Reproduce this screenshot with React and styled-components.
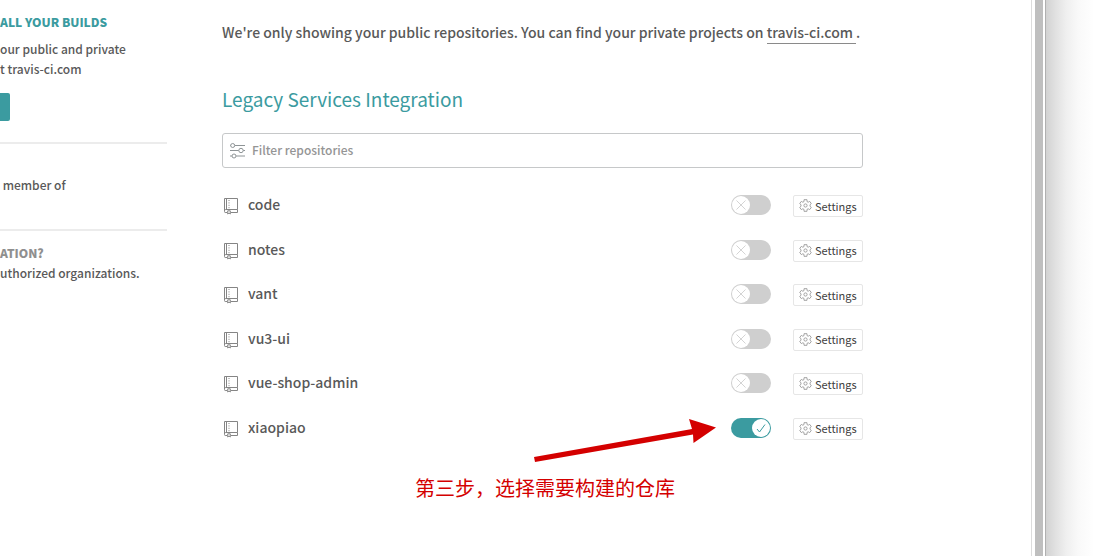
import React, { useState } from "react";
import styled, { createGlobalStyle } from "styled-components";

const teal = "#3b9ba0";
const red = "#d40000";

const GlobalStyle = createGlobalStyle`
  *, *::before, *::after { box-sizing: border-box; }
  body {
    margin: 0;
    background: #fff;
    color: #595959;
    font-family: "Noto Sans CJK SC", sans-serif;
    font-size: 14px;
    font-weight: 500;
    line-height: 20px;
  }
  h2, h3, p, ul { margin: 0; padding: 0; }
  button, input { font-family: inherit; font-weight: inherit; }
`;

const Page = styled.div`
  display: flex;
  min-height: 100vh;
  overflow: hidden;
`;

const Sidebar = styled.aside`
  flex: 0 0 167px;
  font-size: 12px;
  white-space: pre;
`;

const SideSection = styled.section`
  padding: ${(p) => p.$pad};
  border-bottom: ${(p) => (p.$last ? "0" : "2px solid #ececec")};
`;

const SideTitle = styled.h3`
  font-size: 12px;
  line-height: 20px;
  font-weight: 900;
  color: ${(p) => (p.$muted ? "#8f8f8f" : teal)};
  margin-bottom: ${(p) => (p.$muted ? "0" : "7px")};
`;

const SideButton = styled.button`
  display: block;
  width: 10px;
  height: 28px;
  margin-top: 14px;
  padding: 0;
  border: 0;
  border-radius: 0 2px 2px 0;
  background: ${teal};
`;

const Main = styled.main`
  flex: 1 1 auto;
  min-width: 0;
  padding: 21px 168px 0 55px;
`;

const Notice = styled.p`
  font-size: 14px;
  line-height: 22px;
  white-space: nowrap;
`;

const NoticeLink = styled.a`
  display: inline-block;
  line-height: 21px;
  color: inherit;
  text-decoration: none;
  border-bottom: 1px solid #8a8a8a;
  padding-right: 3px;
`;

const Heading = styled.h2`
  margin-top: 40px;
  font-size: 19px;
  line-height: 30px;
  font-weight: 400;
  color: ${teal};
`;

const Filter = styled.label`
  display: flex;
  align-items: center;
  gap: 6px;
  height: 35px;
  margin-top: 19px;
  padding-left: 7px;
  border: 1px solid #c6c8c9;
  border-radius: 3px;
`;

const FilterInput = styled.input`
  flex: 1;
  min-width: 0;
  height: 30px;
  padding: 0 0 2px;
  border: 0;
  outline: 0;
  background: none;
  font-size: 12px;
  color: #595959;
  &::placeholder { color: #959595; opacity: 1; }
`;

const RepoList = styled.ul`
  display: grid;
  grid-auto-rows: 1fr;
  min-height: 267px;
  margin-top: 15px;
  list-style: none;
`;

const Repo = styled.li`
  display: flex;
  align-items: center;

  & > svg { margin-top: 2px; }
`;

const RepoName = styled.span`
  flex: 1;
  margin: 0 0 2px 8px;
  font-size: 14px;
`;

const Switch = styled.label`
  display: block;
  position: relative;
  width: 40px;
  height: 20px;
  margin-right: 22px;
`;

const SwitchInput = styled.input`
  appearance: none;
  display: block;
  width: 40px;
  height: 20px;
  margin: 0;
  border-radius: 10px;
  background: #cfcfcf;
  cursor: pointer;
  &:checked { background: ${teal}; }
`;

const Knob = styled.span`
  position: absolute;
  top: 1px;
  left: ${(p) => (p.$on ? "21px" : "1px")};
  display: grid;
  place-items: center;
  width: 18px;
  height: 18px;
  border-radius: 50%;
  background: #fff;
  pointer-events: none;
`;

const SettingsButton = styled.button`
  display: flex;
  align-items: center;
  gap: 3px;
  width: 70px;
  height: 22px;
  margin-top: 2px;
  padding: 0 0 1px 5px;
  border: 1px solid #e6e6e6;
  border-radius: 2px;
  background: #fff;
  color: #404040;
  font-size: 11px;
  font-weight: 400;
  line-height: 18px;
`;

const Annotation = styled.div`
  position: relative;
  width: 300px;
  margin: 26px 0 0 193px;
  color: ${red};
  font-size: 20px;
  font-weight: 400;
  line-height: 24px;
  white-space: nowrap;
`;

const Arrow = styled.svg`
  position: absolute;
  left: 119px;
  bottom: 36px;
  pointer-events: none;
`;

const WindowEdge = styled.div`
  flex: 0 0 15px;
  padding: 0 2px 0 3px;
  border-left: 1px solid #dcdcdc;
  border-right: 1px solid #b0b0b0;
  &::before {
    content: "";
    display: block;
    width: 8px;
    height: 100%;
    background: #bfbfbf;
  }
`;

const WindowShadow = styled.div`
  flex: 0 0 72px;
  background: linear-gradient(to right, #d2d2d2 0, #e0e0e0 9px, #efefef 20px, #f9f9f9 32px, #fefefe 46px, #fff 48px);
`;

const FilterIcon = () => (
  <svg width="16" height="18" viewBox="0 0 16 18" fill="none" stroke="#8e9496" strokeWidth="1">
    <path d="M0 3.5H0.6M4.8 3.5H15M0 8.5H8.7M13.3 8.5H15M0 14H1.9M6.1 14H15" />
    <circle cx="2.7" cy="3.5" r="2" />
    <circle cx="11" cy="8.5" r="2.2" />
    <circle cx="4" cy="14" r="2" />
  </svg>
);

const RepoIcon = () => (
  <svg width="18" height="18" viewBox="0 0 18 18" fill="none" stroke="#858585" strokeWidth="1">
    <path d="M5 15.5H3.2Q2.5 15.5 2.5 14.5V1.5H15.5V12.5H3.5Q2.5 12.5 2.5 14M15.5 12.5V15.5H9M4.5 1.5V12.5" />
    <path d="M7 3V11.5" strokeDasharray="1 1.4" />
    <path d="M5.7 13.8H8.3V17L7 16L5.7 17Z" />
  </svg>
);

const GearIcon = () => (
  <svg width="13" height="13" viewBox="0 0 13 13" fill="none" stroke="#9a9a9a" strokeWidth="0.9">
    <path d="M5 0.7H8V2.6L9.2 3.2L10.7 2.4L12.3 4.6L11 5.7V7.3L12.3 8.4L10.7 10.6L9.2 9.8L8 10.4V12.3H5V10.4L3.8 9.8L2.3 10.6L0.7 8.4L2 7.3V5.7L0.7 4.6L2.3 2.4L3.8 3.2L5 2.6Z" />
    <circle cx="6.5" cy="6.5" r="1.6" />
  </svg>
);

function Toggle({ name, initial }) {
  const [on, setOn] = useState(initial);
  return (
    <Switch>
      <SwitchInput type="checkbox" aria-label={name} checked={on} onChange={() => setOn(!on)} />
      <Knob $on={on}>
        <svg width="12" height="12" viewBox="0 0 12 12" fill="none" stroke={on ? teal : "#d4d4d4"} strokeWidth="1">
          <path d={on ? "M2 7L4.5 10L10 2.5" : "M1.5 1.5L10.5 10.5M10.5 1.5L1.5 10.5"} />
        </svg>
      </Knob>
    </Switch>
  );
}

const repos = [
  { name: "code" },
  { name: "notes" },
  { name: "vant" },
  { name: "vu3-ui" },
  { name: "vue-shop-admin" },
  { name: "xiaopiao", active: true },
];

export default function App() {
  return (
    <>
      <GlobalStyle />
      <Page>
        <Sidebar>
          <SideSection $pad="12px 0 21px">
            <SideTitle>ALL YOUR BUILDS</SideTitle>
            <p>our public and private</p>
            <p>t travis-ci.com</p>
            <SideButton type="button" aria-label="Open" />
          </SideSection>
          <SideSection $pad="31px 0 34px">
            <p>{" member of"}</p>
          </SideSection>
          <SideSection $pad="12px 0" $last>
            <SideTitle $muted>ATION?</SideTitle>
            <p>uthorized organizations.</p>
          </SideSection>
        </Sidebar>
        <Main>
          <Notice>
            We're only showing your public repositories. You can find your private projects on{" "}
            <NoticeLink href="#travis">travis-ci.com</NoticeLink>.
          </Notice>
          <Heading>Legacy Services Integration</Heading>
          <Filter>
            <FilterIcon />
            <FilterInput type="text" aria-label="Filter repositories" placeholder="Filter repositories" />
          </Filter>
          <RepoList>
            {repos.map((r) => (
              <Repo key={r.name}>
                <RepoIcon />
                <RepoName>{r.name}</RepoName>
                <Toggle name={r.name} initial={!!r.active} />
                <SettingsButton type="button">
                  <GearIcon />
                  Settings
                </SettingsButton>
              </Repo>
            ))}
          </RepoList>
          <Annotation>
            <Arrow width="184" height="46" viewBox="0 0 184 46" fill={red}>
              <path d="M0 39L158 11L155 1L182 9.5L159.5 25L159 16.5L1 44Z" />
            </Arrow>
            第三步，选择需要构建的仓库
          </Annotation>
        </Main>
        <WindowEdge />
        <WindowShadow />
      </Page>
    </>
  );
}
